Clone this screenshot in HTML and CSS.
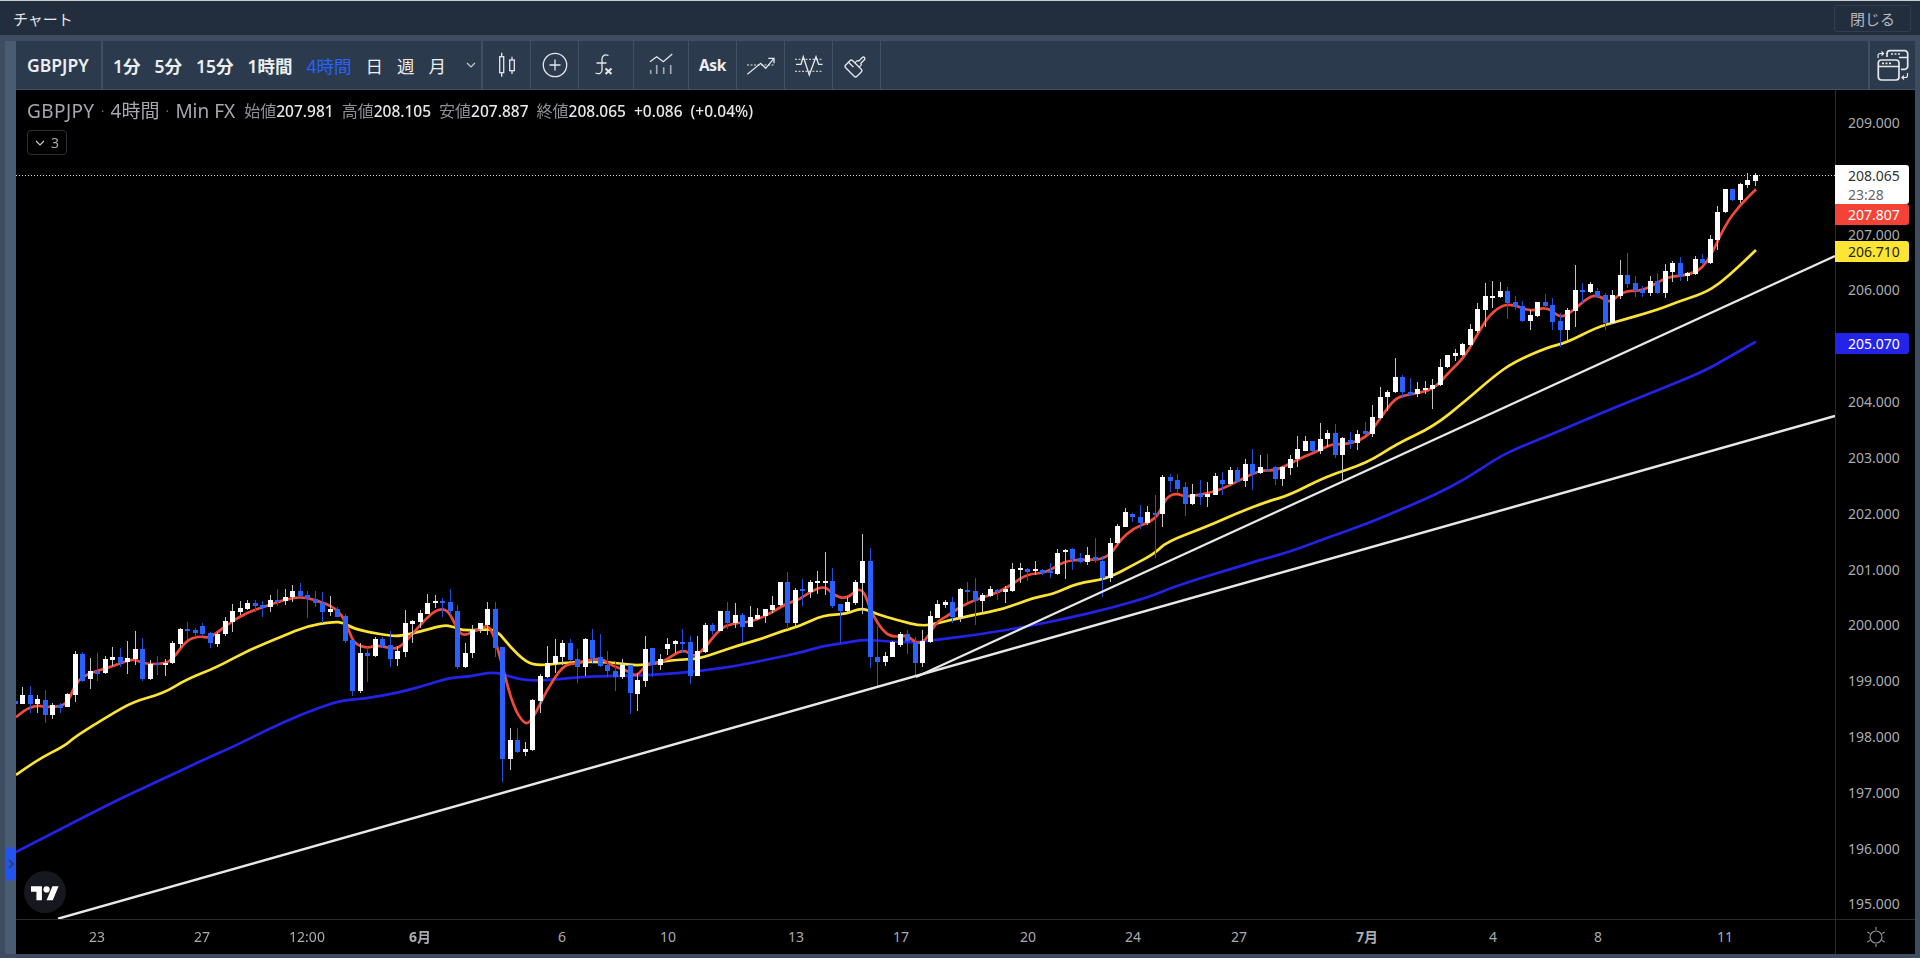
FILE: index.html
```html
<!DOCTYPE html>
<html lang="ja">
<head>
  <meta charset="UTF-8" />
  <meta name="viewport" content="width=device-width, initial-scale=1.0"/>
  <title>チャート</title>
  <link rel="stylesheet" href="styles.css">
</head>
<body>
  <header class="titlebar">
    <span class="titlebar-name">チャート</span>
    <button class="close-btn">閉じる</button>
  </header>

  <div class="workspace">
    <div class="side-strip">
      <div class="tab-handle">
        <svg width="6" height="10" viewBox="0 0 6 10"><path d="M1 1l4 4-4 4"/></svg>
      </div>
    </div>
    <main class="panel">
      <!-- Toolbar -->
      <nav class="toolbar">
        <div class="symbol">GBPJPY</div>
        <div class="intervals">
          <span>1分</span>
          <span>5分</span>
          <span>15分</span>
          <span>1時間</span>
          <span class="active">4時間</span>
          <span>日</span>
          <span>週</span>
          <span>月</span>
          <svg class="chevron" width="10" height="6" viewBox="0 0 10 6"><path d="M1 1l4 4 4-4"/></svg>
        </div>
        <div class="tool-btn">
          <svg class="icon" width="28" height="28" viewBox="0 0 28 28">
            <path d="M8.7 1.7v4M8.7 21.7v4M19 5.7V9M19 19.7V23"/>
            <rect x="6.7" y="5.7" width="4" height="16"/>
            <rect x="16.7" y="9" width="4.6" height="10.7"/>
          </svg>
        </div>
        <div class="tool-btn">
          <svg class="icon" width="28" height="28" viewBox="0 0 28 28">
            <circle cx="14" cy="14" r="11.7"/>
            <path d="M14 8.5v11M8.5 14h11"/>
          </svg>
        </div>
        <div class="tool-btn wide">
          <svg class="icon" width="28" height="28" viewBox="0 0 28 28">
            <path d="M16.5 4.5C13 3 10 4.5 10 8v11c0 3.5-3 4.5-6.5 3M4.5 12h10"/>
            <path class="thick" d="M13.5 17.5l6 5.5M19.5 17.5l-6 5.5"/>
          </svg>
        </div>
        <div class="tool-btn wide">
          <svg class="icon" width="28" height="28" viewBox="0 0 28 28">
            <path d="M3 10.7l6.7-5 6.600 5 9-7.700"/>
            <path class="soft" d="M3.7 19v4M9.7 14v9M16.7 16.3V23M23.7 14v9"/>
          </svg>
        </div>
        <div class="tool-btn ask">Ask</div>
        <div class="tool-btn">
          <svg class="icon" width="28" height="28" viewBox="0 0 28 28">
            <path d="M.3 23.3l13.4-11 5 5L27 7.300M21.300 7.300H27v5"/>
            <path class="dots" d="M0 14h28"/>
          </svg>
        </div>
        <div class="tool-btn">
          <svg class="icon" width="28" height="28" viewBox="0 0 28 28">
            <path d="M1 13.3h5l2.3-7.6 6 18.3 6.700-18.300 2.600 7.600h4"/>
            <path class="dots" d="M0 8.300h28M0 20.300h28"/>
          </svg>
        </div>
        <div class="tool-btn">
          <svg class="icon" width="28" height="28" viewBox="0 0 28 28">
            <g transform="rotate(45 14 14)">
              <rect x="6" y="14" width="16" height="10" rx="2"/>
              <path d="M11 14v-2.500a1.500 1.500 0 0 1 1.500-1.500V5a1.500 1.500 0 0 1 3 0v5a1.500 1.500 0 0 1 1.500 1.500V14M6 18h7"/>
            </g>
          </svg>
        </div>
        <div class="tool-btn layout-btn">
          <svg class="icon layout-icon" width="34" height="34" viewBox="0 0 34 34">
            <path d="M11 9V5.700a3 3 0 0 1 3-3h14.700a3 3 0 0 1 3 3v12.600a3 3 0 0 1-3 3H25M23 9.500h8.700M15 6h2M18.500 6h2M22 6h2"/>
            <rect x="2.3" y="12" width="20.700" height="20" rx="3"/>
            <path d="M2.300 18.500h20.700M6 15.300h2M9.500 15.300h2M13 15.300h2"/>
            <path class="thin" d="M2 10V7.500a2 2 0 0 1 2-2h3M5.500 3.500l2 2-2 2M31.500 25v2.500a2 2 0 0 1-2 2h-3M28 27.500l-2 2 2 2"/>
          </svg>
        </div>
      </nav>

      <section class="chart">
        <div class="plot">
          <canvas id="chart" width="1819" height="829"></canvas>

          <div class="legend">
            <span class="legend-title">GBPJPY</span>
            <span class="legend-dot">·</span>
            <span class="legend-title">4時間</span>
            <span class="legend-dot">·</span>
            <span class="legend-title">Min FX</span>
            <span class="legend-values">
              <span><i>始値</i>207.981</span>
              <span><i>高値</i>208.105</span>
              <span><i>安値</i>207.887</span>
              <span><i>終値</i>208.065</span>
              <span>+0.086</span>
              <span>(+0.04%)</span>
            </span>
          </div>
          <div class="collapse-btn">
            <svg class="chevron" width="10" height="6" viewBox="0 0 10 6"><path d="M1 1l4 4 4-4"/></svg>
            <span>3</span>
          </div>

          <div class="tv-logo">
            <svg width="28" height="19" viewBox="0 0 36 24"><path d="M14 22H7V11H0V4h14v18zM28 22h-8l7.500-18h8L28 22z"/><circle cx="20" cy="8" r="4"/></svg>
          </div>
        </div>

        <div class="price-axis">
          <div>209.000</div>
          <div>208.000</div>
          <div>207.000</div>
          <div>206.000</div>
          <div>205.000</div>
          <div>204.000</div>
          <div>203.000</div>
          <div>202.000</div>
          <div>201.000</div>
          <div>200.000</div>
          <div>199.000</div>
          <div>198.000</div>
          <div>197.000</div>
          <div>196.000</div>
          <div>195.000</div>

          <div class="badge badge-last">208.065<small>23:28</small></div>
          <div class="badge badge-red">207.807</div>
          <div class="badge badge-yellow">206.710</div>
          <div class="badge badge-blue">205.070</div>
        </div>

        <div class="time-axis" id="time-axis"></div>
        <div class="corner">
          <svg width="20" height="20" viewBox="0 0 20 20">
            <circle cx="10" cy="10" r="6"/>
            <path d="M10 0v3M10 17v3M1.300 5l2.600 1.500M16.100 13.500l2.600 1.500M1.300 15l2.600-1.500M16.100 6.500L18.700 5"/>
          </svg>
        </div>
      </section>
    </main>
  </div>

  <script src="chart.js"></script>
</body>
</html>
```

FILE: styles.css
```css
* {
  box-sizing: border-box;
}

body {
  margin: 0;
  height: 958px;
  overflow: hidden;
  background: #3d4d5f;
  color: #d8dade;
  font-family: "Noto Sans", "Noto Sans CJK JP", sans-serif;
  display: flex;
  flex-direction: column;
}

.titlebar {
  height: 35px;
  flex: none;
  display: flex;
  align-items: center;
  justify-content: space-between;
  padding: 0 9px 0 13px;
  background: #222e3e;
  border-top: 1px solid #c9ccd0;
}

.titlebar-name {
  font-size: 15px;
  color: #e4e6ea;
}

.close-btn {
  width: 77px;
  height: 27px;
  background: none;
  border: 1px solid #303e51;
  border-radius: 3px;
  color: #b4b8be;
  font: inherit;
  font-size: 15px;
}

.workspace {
  flex: 1;
  display: flex;
  min-height: 0;
  padding: 6px 5px 4px;
}

.side-strip {
  position: relative;
  width: 11px;
  flex: none;
  background: #4a5c72;
}

.tab-handle {
  position: absolute;
  left: 0;
  top: 806px;
  width: 11px;
  height: 34px;
  display: flex;
  align-items: center;
  justify-content: center;
  background: #2255ee;
  border-radius: 5px;
}

.tab-handle svg {
  fill: none;
  stroke: #31394a;
  stroke-width: 1.5;
}

.panel {
  flex: 1;
  min-width: 0;
  display: flex;
  flex-direction: column;
}

/* Toolbar */
.toolbar {
  height: 49px;
  flex: none;
  display: flex;
  background: #2b3a4c;
  border-bottom: 1px solid #3f5062;
  color: #eceef0;
  font-size: 17.5px;
  font-weight: 600;
}

.symbol {
  width: 87px;
  padding-left: 11px;
  line-height: 48px;
  border-right: 2px solid #3f5062;
}

.intervals {
  width: 380px;
  flex: none;
  padding-left: 10px;
  display: flex;
  align-items: center;
  gap: 14px;
  white-space: nowrap;
  border-right: 2px solid #3f5062;
}

.intervals span {
  flex: none;
}

.intervals .active {
  color: #2962ff;
  font-weight: 400;
}

.intervals span:nth-of-type(n+6) {
  font-weight: 400;
}

.chevron {
  fill: none;
  stroke: #c8cbd0;
  stroke-width: 1.2;
}

.intervals .chevron {
  margin-left: 6px;
}

.tool-btn {
  width: 48px;
  flex: none;
  display: flex;
  align-items: center;
  justify-content: center;
  border-right: 1px solid #3f5062;
}

.tool-btn.wide {
  width: 55px;
}

.tool-btn.ask {
  font-weight: 700;
  font-size: 15.5px;
  letter-spacing: -0.3px;
}

.layout-btn {
  margin-left: auto;
  width: 47px;
  border-right: 0;
  border-left: 2px solid #3f5062;
}

.icon {
  fill: none;
  stroke: #e6e8ea;
  stroke-width: 1.3;
}

.icon .thick {
  stroke-width: 2;
}

.icon .soft {
  stroke: #a8adb4;
  stroke-width: 1.6;
}

.icon .dots {
  stroke-width: 1;
  stroke-dasharray: 2 1.5;
}

.layout-icon {
  stroke-width: 1.7;
}

.layout-icon .thin {
  stroke-width: 1.2;
}

/* Chart */
.chart {
  flex: 1;
  min-height: 0;
  display: grid;
  grid-template-columns: 1fr 80px;
  grid-template-rows: 829px 35px;
  background: #000;
}

.plot {
  position: relative;
  overflow: hidden;
}

#chart {
  display: block;
}

.legend {
  position: absolute;
  left: 11px;
  top: 8px;
  display: flex;
  align-items: center;
  white-space: nowrap;
  color: #a6a8ad;
  font-size: 19px;
  line-height: 27px;
}

.legend-title:first-child {
  letter-spacing: 0.4px;
}

.legend-dot {
  width: 16px;
  text-align: center;
  font-size: 12px;
  color: #777;
}

.legend-values {
  display: flex;
  gap: 8px;
  margin-left: 9px;
  color: #e6e7e9;
  font-size: 15.5px;
  font-weight: 500;
}

.legend-values i {
  font-style: normal;
  font-weight: 400;
  color: #8e9095;
  font-size: 16px;
}

.collapse-btn {
  position: absolute;
  left: 11px;
  top: 40px;
  width: 40px;
  height: 25px;
  display: flex;
  align-items: center;
  justify-content: center;
  gap: 6px;
  border: 1px solid #2c3036;
  border-radius: 4px;
  font-size: 14px;
  color: #a6a8ad;
}

.tv-logo {
  position: absolute;
  left: 8px;
  top: 781px;
  width: 42px;
  height: 42px;
  display: flex;
  align-items: center;
  justify-content: center;
  border-radius: 50%;
  background: #17171f;
}

.tv-logo svg {
  fill: #fff;
}

/* Axes */
.price-axis {
  position: relative;
  padding-top: 5px;
  border-left: 1px solid #2a2a2a;
  font-size: 14px;
  color: #a9abb0;
}

.price-axis > div:not(.badge) {
  height: 55.82px;
  line-height: 55.82px;
  padding-left: 12px;
}

.badge {
  position: absolute;
  left: -1px;
  width: 74px;
  padding-left: 13px;
  line-height: 21px;
  border-radius: 0 3px 3px 0;
}

.badge small {
  display: block;
  font-size: 14px;
  line-height: 18px;
  color: #666;
}

.badge-last {
  top: 75px;
  height: 39px;
  background: #fff;
  color: #333;
}

.badge-red {
  top: 114px;
  height: 21px;
  background: #f44336;
  color: #fff;
}

.badge-yellow {
  top: 151px;
  height: 21px;
  background: #ffe533;
  color: #222;
}

.badge-blue {
  top: 243px;
  height: 21px;
  background: #2424e8;
  color: #fff;
}

.time-axis {
  position: relative;
  border-top: 1px solid #2a2a2a;
  font-size: 14px;
  line-height: 34px;
  color: #a9abb0;
}

.time-axis span {
  position: absolute;
  transform: translateX(-50%);
}

.time-axis .month {
  font-weight: 700;
}

.corner {
  display: flex;
  align-items: center;
  justify-content: center;
  border-top: 1px solid #2a2a2a;
  border-left: 1px solid #2a2a2a;
}

.corner svg {
  fill: none;
  stroke: #8d9096;
  stroke-width: 1.2;
}
```

FILE: chart.js
```js
// offset of the plot on the page, all data below is in page pixels
const ORIGIN_X = 16;
const ORIGIN_Y = 90;
const SPACING = 7.5;

// candles: [high, top, bottom, low, colour], values are 3x above y0
const candleBlocks = [
  { y0: 580, from: -1, rows: [
    [355,362,371,380,"b"],[320,344,371,371,"w"],[318,344,371,398,"b"],[345,358,372,400,"w"],[330,360,404,428,"b"],
    [368,375,404,416,"w"],[368,375,384,398,"b"],[338,342,382,382,"w"],[212,222,344,365,"w"],[216,222,302,306,"b"],
    [233,272,298,326,"w"],[218,272,281,302,"b"],[228,236,280,282,"w"],[200,230,239,258,"w"],[204,231,248,260,"b"],
    [182,234,247,281,"w"],[152,207,236,254,"w"],[174,207,296,302,"b"],[240,251,296,299,"w"],[227,250,255,285,"b"],
    [238,248,254,287,"w"],[182,188,250,253,"w"],[143,146,191,205,"w"],[125,146,152,180,"b"],[143,150,158,170,"b"],
    [128,138,162,168,"b"],[156,158,190,203,"b"],[155,162,191,200,"w"],[110,123,163,167,"w"],[72,92,125,155,"w"],
    [62,83,95,105,"w"],[60,68,86,90,"w"],[60,68,77,95,"b"],[62,74,84,110,"b"],[46,59,82,96,"w"],
    [28,60,64,78,"b"],[27,50,64,75,"w"],[15,32,52,65,"w"],[10,32,48,50,"b"],[32,44,58,113,"b"],
    [32,57,70,80,"b"],[35,68,95,130,"b"],[47,86,95,107,"w"],[80,87,110,112,"b"],[102,108,182,190,"b"],
    [180,180,332,348,"b"],[188,218,332,338,"w"],[200,219,227,305,"b"],[172,176,227,230,"w"],[172,177,197,205,"b"],
    [152,195,236,262,"b"],[197,212,236,258,"w"]
  ]},
  { y0: 570, from: 51, rows: [
    [120,158,245,260,"w"],[150,153,162,220,"w"],[120,128,155,175,"w"],[73,98,131,133,"w"],[75,92,100,115,"w"],
    [85,94,98,140,"b"],[57,96,124,135,"b"],[105,123,290,296,"b"],[220,248,290,293,"w"],[165,180,250,265,"w"],
    [158,158,178,190,"w"],[95,116,165,195,"w"],[97,116,233,262,"b"],[232,232,567,635,"b"],[475,510,567,600,"w"],
    [475,510,545,548,"b"],[515,538,545,557,"w"],[388,390,540,542,"w"],[312,318,392,428,"w"],[227,280,320,325,"w"],
    [207,258,282,310,"w"],[210,218,260,285,"w"],[207,218,270,272,"b"],[238,268,290,338,"b"],[203,208,290,318,"w"],
    [177,210,265,282,"b"],[193,262,287,292,"b"],[243,285,304,322,"b"],[272,303,322,362,"b"],[268,285,322,328,"w"],
    [285,285,370,433,"b"],[310,330,371,422,"w"],[197,236,332,352,"w"],[235,235,285,320,"b"],[252,268,285,300,"w"],
    [203,221,236,256,"w"],[210,214,223,250,"w"],[177,216,218,250,"b"],[197,215,317,343,"b"],[197,243,317,318,"w"],
    [160,164,245,248,"w"],[158,164,182,195,"b"],[122,122,182,184,"w"],[97,123,158,178,"b"],[98,134,158,175,"w"],
    [130,134,170,220,"b"],[108,140,170,172,"w"],[115,134,147,150,"w"],[116,117,137,158,"w"],[77,104,120,130,"w"],
    [36,36,106,108,"w"],[5,35,158,178,"b"],[55,60,158,170,"w"]
  ]},
  { y0: 520, from: 104, rows: [
    [178,208,214,258,"b"],[180,187,217,235,"w"],[152,182,190,222,"w"],[95,182,188,225,"w"],[143,182,258,263,"b"],
    [253,253,272,368,"b"],[230,245,272,275,"w"],[180,187,248,255,"w"],[43,122,190,283,"w"],[85,122,412,443,"b"],
    [318,410,425,497,"b"],[395,407,425,437,"w"],[362,365,410,410,"w"],[335,342,375,380,"w"],[330,342,362,402,"b"],
    [352,366,428,472,"b"],[330,362,428,440,"w"],[273,288,365,370,"w"],[240,252,293,295,"w"],[240,246,254,263,"w"],
    [230,246,290,310,"b"],[205,208,290,305,"w"],[185,210,214,245,"b"],[173,212,243,315,"b"],[218,224,242,280,"w"],
    [197,208,227,232,"w"],[208,209,215,240,"b"],[197,207,216,248,"w"],[130,146,212,215,"w"],[128,145,148,190,"w"],
    [145,146,157,182,"b"],[122,148,154,165,"w"],[147,150,158,165,"b"],[128,153,160,175,"b"],[88,100,163,165,"w"],
    [88,90,96,178,"w"],[85,88,118,150,"b"],[100,113,127,130,"b"],[82,104,127,135,"w"],[55,112,120,130,"b"],
    [107,122,175,230,"b"],[53,68,175,187,"w"],[12,17,68,72,"w"]
  ]},
  { y0: 440, from: 147, rows: [
    [205,217,262,262,"w"],[218,222,232,245,"b"],[195,230,250,268,"b"],[198,217,250,255,"w"],[165,220,225,355,"b"],
    [105,112,222,260,"w"],[103,112,123,157,"b"],[103,119,147,160,"b"],[125,142,192,228,"b"]
  ]},
  { y0: 380, from: 156, rows: [
    [312,342,373,375,"w"],[300,343,352,375,"b"],[305,341,352,380,"w"],[280,287,344,345,"w"],[277,300,312,345,"b"],
    [262,270,312,314,"w"],[262,270,305,308,"b"],[238,253,304,320,"w"],[208,253,282,330,"b"],[225,262,280,282,"w"],
    [222,268,272,274,"b"],[258,262,298,315,"b"],[258,262,298,318,"w"],[225,236,265,285,"w"],[168,208,238,260,"w"],
    [168,184,212,214,"w"],[182,184,212,216,"b"],[130,176,212,222,"w"],[150,160,178,200,"w"],[133,160,225,235,"b"],
    [172,175,224,300,"w"],[157,180,190,207,"b"],[150,163,190,210,"w"],[127,152,162,165,"b"],[75,112,163,172,"w"],
    [22,50,115,117,"w"],[30,35,52,92,"w"]
  ]},
  { y0: 270, from: 183, rows: [
    [265,322,366,368,"w"],[316,322,366,384,"b"],[325,365,374,378,"b"],[337,356,373,382,"w"],[332,355,358,372,"w"],
    [328,344,357,418,"w"],[268,290,345,347,"w"],[256,256,292,293,"w"],[238,250,258,272,"w"]
  ]},
  { y0: 170, from: 192, rows: [
    [520,523,554,558,"w"],[462,478,526,528,"w"],[400,417,483,488,"w"],[340,378,420,472,"w"],[334,378,381,413,"w"],
    [336,364,382,385,"w"],[350,364,400,447,"b"],[378,397,412,420,"b"],[393,408,454,456,"b"],[420,436,454,480,"w"],
    [396,397,438,440,"w"],[372,397,408,418,"b"],[385,406,456,480,"b"],[430,453,481,532,"b"],[415,421,481,513,"w"],
    [285,361,424,470,"w"],[340,360,362,400,"b"],[337,343,367,370,"w"],[353,363,380,382,"b"],[369,376,460,480,"b"],
    [360,376,460,462,"w"],[270,316,378,387,"w"],[250,316,342,355,"b"],[318,339,362,382,"b"],[348,359,370,380,"b"],
    [318,334,370,378,"w"],[308,333,370,372,"b"],[283,304,370,385,"w"],[273,280,306,336,"w"],[262,280,318,333,"b"],
    [305,310,318,333,"w"],[258,267,312,315,"w"],[252,267,280,282,"b"],[195,207,280,282,"w"],[108,126,210,240,"w"],
    [57,57,126,128,"w"],[57,57,90,93,"b"],[40,43,90,98,"w"],[10,30,46,54,"w"],[9,15,33,48,"w"]
  ]}
];

// moving averages, measured in pieces: [x0, y0, x1, y1, ...] at 3x
const piece = (ox, oy, pts) => pts.map((v, i) => (i % 2 ? oy : ox) + v / 3);

const redLine = [
  ...piece(0, 580, [48,412,70,392,110,375,135,382,200,378,222,320,250,285,340,258,400,235,430,252,495,252,520,235,560,180,600,168,630,175,680,135,740,97,800,78,850,60,900,50,950,60,1010,85,1040,130,1060,190,1100,205,1130,195,1170,205]),
  ...piece(400, 570, [0,235,60,165,100,125,130,115,150,130,175,185,195,198,240,175,265,165,285,205,310,300,340,410,375,467,400,445,440,360,490,285,530,280,600,262,640,290,680,300,710,322,740,280,780,282,850,235,880,262,910,240,960,175,1000,160,1060,155,1120,125,1160,100]),
  ...piece(800, 520, [0,238,30,215,75,197,100,225,140,238,185,195,215,280,250,335,280,352,320,345,350,370,375,365,410,305,440,290,480,260,530,238,600,215,640,190,680,163,740,158,790,125,840,118,900,120,935,100,960,60,1000,25]),
  ...piece(1150, 380, [0,425,25,405,50,350,80,340,105,350,150,345,210,330,260,305,330,270,380,272,450,235,500,215,550,190,580,195,650,175,690,115,735,55,770,45,850,30]),
  ...piece(1450, 170, [0,603,40,565,70,515,110,445,150,408,190,402,240,425,290,410,330,443,360,430,420,377,450,378,480,400,520,362,580,363,650,320,720,315,770,285,825,165,870,105,918,58])
];

const yellowLine = [
  ...piece(0, 580, [48,585,110,540,195,497,225,470,330,405,400,365,490,340,560,298,650,262,750,208,850,168,920,138,1000,125,1030,128,1060,145,1110,157,1170,167]),
  ...piece(400, 570, [0,198,60,185,130,165,160,170,190,182,250,178,290,180,330,230,380,278,420,287,500,277,600,275,660,280,720,288,800,272,860,268,900,265,960,245,1020,225,1090,205,1140,185]),
  ...piece(800, 520, [0,318,70,285,140,283,185,262,230,282,290,300,370,320,430,305,520,285,610,268,700,233,760,222,830,190,920,177,1000,135,1065,100]),
  ...piece(1150, 380, [50,485,170,440,260,400,350,365,420,345,530,288,650,250,740,192,850,140,950,60]),
  ...piece(1450, 170, [130,620,190,577,290,533,350,518,440,472,500,455,620,420,680,397,760,370,810,340,860,295,918,240])
];

const blueLine = [
  16,852, 63,828, 117,800,
  ...piece(0, 580, [500,592,620,535,700,500,800,450,900,405,1000,368,1040,360,1100,355,1200,337]),
  ...piece(400, 570, [80,345,150,323,210,320,280,305,330,320,380,332,450,330,550,320,700,317,800,312,880,305,1000,290,1120,265]),
  ...piece(800, 520, [0,398,70,378,130,370,190,358,270,365,350,367,420,358,540,343,680,320,800,295,930,265,1050,230,1130,197]),
  ...piece(1150, 380, [330,540,420,515,540,470,660,428,760,385,850,347,950,295,1040,235,1100,205,1200,165]),
  ...piece(1450, 170, [475,720,600,670,760,605,830,565,918,515])
];

const canvas = document.getElementById("chart");
const ctx = canvas.getContext("2d");
ctx.translate(-ORIGIN_X, -ORIGIN_Y);

function drawSmooth(points, colour) {
  ctx.beginPath();
  ctx.moveTo(points[0], points[1]);
  for (let i = 2; i < points.length - 2; i += 2) {
    const midX = (points[i] + points[i + 2]) / 2;
    const midY = (points[i + 1] + points[i + 3]) / 2;
    ctx.quadraticCurveTo(points[i], points[i + 1], midX, midY);
  }
  ctx.lineTo(points[points.length - 2], points[points.length - 1]);
  ctx.strokeStyle = colour;
  ctx.lineWidth = 2.7;
  ctx.lineJoin = "round";
  ctx.stroke();
}

function drawCandle(index, [high, top, bottom, low, colour], y0) {
  const x = Math.round(22.3 + SPACING * index);
  const y = (v) => Math.round(y0 + v / 3);
  ctx.fillStyle = colour === "w" ? "#c4c4c4" : "#1f4fd8";
  ctx.fillRect(x, y(high), 1, Math.max(1, y(low) - y(high)));
  ctx.fillStyle = colour === "w" ? "#ffffff" : "#2962ff";
  ctx.fillRect(x - 2, y(top), 5, Math.max(2, y(bottom) - y(top)));
}

function drawTrend(x0, y0, x1, y1) {
  ctx.beginPath();
  ctx.moveTo(x0, y0);
  ctx.lineTo(x1, y1);
  ctx.strokeStyle = "#e8e8e8";
  ctx.lineWidth = 2.4;
  ctx.stroke();
}

// last price line
ctx.fillStyle = "#d8d8d8";
for (let x = ORIGIN_X; x < 1835; x += 3) {
  ctx.fillRect(x, 175, 1, 1);
}

drawSmooth(blueLine, "#2323e6");
drawSmooth(yellowLine, "#fde333");
drawSmooth(redLine, "#f04a3a");

candleBlocks.forEach((block) => {
  block.rows.forEach((row, i) => drawCandle(block.from + i, row, block.y0));
});

drawTrend(58, 918.7, 1835, 416);
drawTrend(916, 677, 1835, 256);

// time scale labels
const timeLabels = [
  ["23", 97], ["27", 202], ["12:00", 307], ["6月", 420, true], ["6", 562],
  ["10", 668], ["13", 796], ["17", 901], ["20", 1028], ["24", 1133],
  ["27", 1239], ["7月", 1367, true], ["4", 1493], ["8", 1598], ["11", 1725]
];
const timeAxis = document.getElementById("time-axis");
timeLabels.forEach(([text, x, isMonth]) => {
  const label = document.createElement("span");
  label.textContent = text;
  label.style.left = `${x - ORIGIN_X}px`;
  if (isMonth) label.className = "month";
  timeAxis.appendChild(label);
});
```
